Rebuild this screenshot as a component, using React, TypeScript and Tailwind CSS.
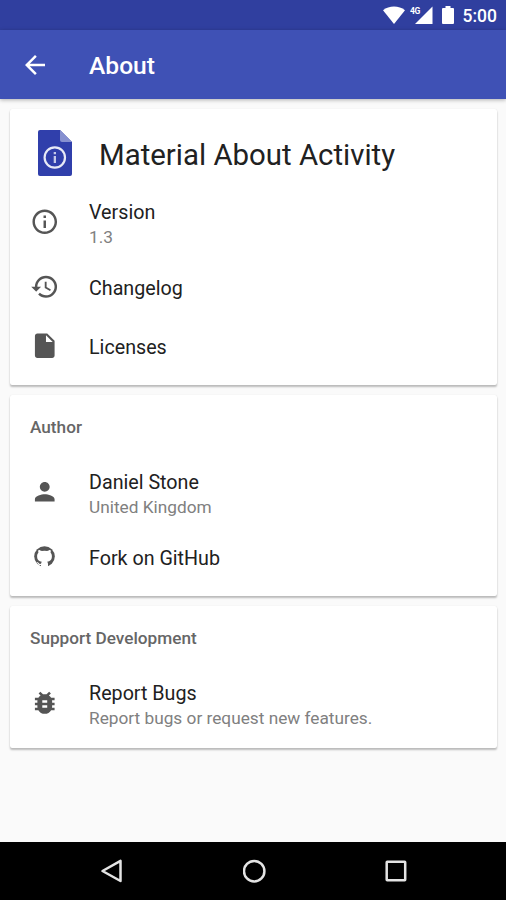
import type { ReactNode } from 'react';
import {
  MdArrowBack,
  MdBugReport,
  MdHistory,
  MdInfoOutline,
  MdInsertDriveFile,
  MdPerson,
} from 'react-icons/md';

type AboutItem = {
  icon: ReactNode;
  text: string;
  subText?: string;
};

type AboutCardProps = {
  title?: string;
  items: AboutItem[];
  children?: ReactNode;
};

function GithubIcon() {
  return (
    <svg width="21" height="21" viewBox="0 0 21 21">
      <circle cx="10.500" cy="10.500" r="10.300" fill="currentColor" />
      <path
        d="M4.500 3.900c1.300 0 2.500.6 3.400 1.200a12 12 0 0 1 5.200 0c.9-.6 2.100-1.200 3.400-1.200.4 1 .4 2 .1 2.800.9.900 1.300 2.100 1.300 3.600 0 3.700-2 5.200-4.700 5.500.5.500.8 1.200.8 2.100V21H7v-2c-2 .4-2.800-.6-3.400-1.700-.3-.6-.7-.9-1.200-1.200.9-.4 1.600.1 2.200.9.700.9 1.200 1.100 2.400.8.100-.8.400-1.500.8-2-2.700-.3-4.700-1.800-4.700-5.500 0-1.500.4-2.700 1.300-3.600-.3-.8-.3-1.800.1-2.800Z"
        fill="white"
      />
    </svg>
  );
}

const appItems: AboutItem[] = [
  { icon: <MdInfoOutline size={29.5} />, text: 'Version', subText: '1.3' },
  { icon: <MdHistory size={29.5} />, text: 'Changelog' },
  { icon: <MdInsertDriveFile size={29.5} />, text: 'Licenses' },
];

const authorItems: AboutItem[] = [
  { icon: <MdPerson size={29.5} />, text: 'Daniel Stone', subText: 'United Kingdom' },
  { icon: <GithubIcon />, text: 'Fork on GitHub' },
];

const supportItems: AboutItem[] = [
  { icon: <MdBugReport size={29.5} />, text: 'Report Bugs', subText: 'Report bugs or request new features.' },
];

function StatusBar() {
  return (
    <div className="flex h-[30px] items-center justify-end bg-[#303f9f] pr-[9px] text-white">
      <svg className="h-[18px] w-[22px]" viewBox="0 0 22 18" fill="currentColor">
        <path d="M11 18 0 4.300C6-.7 16-.7 22 4.300Z" />
      </svg>
      <svg className="ml-[5px] h-[18px] w-[23px]" viewBox="0 0 23 18" fill="currentColor">
        <path d="M22.500 .5V18H5Z" />
        <text x="0" y="8" fontSize="8.500" fontWeight="700" fontFamily="Roboto, sans-serif" letterSpacing="-0.300" stroke="#303f9f" strokeWidth="1.500" paintOrder="stroke">
          4G
        </text>
      </svg>
      <svg className="ml-[9px] h-[18px] w-[12px]" viewBox="0 0 12 18" fill="currentColor">
        <path d="M3.500 0h5v2H11a1 1 0 0 1 1 1v14a1 1 0 0 1-1 1H1a1 1 0 0 1-1-1V3a1 1 0 0 1 1-1h2.500Z" />
      </svg>
      <span className="ml-[9px] pt-[3px] text-[17.500px] font-medium leading-none">5:00</span>
    </div>
  );
}

function AppIcon() {
  return (
    <svg className="h-[46px] w-[34px]" viewBox="0 0 34 46">
      <path d="M2 0H22L34 12V44a2 2 0 0 1-2 2H2a2 2 0 0 1-2-2V2A2 2 0 0 1 2 0Z" fill="#303fab" />
      <path d="M22 0 34 12H24a2 2 0 0 1-2-2Z" fill="#8690d0" />
      <circle cx="16.800" cy="27.500" r="10.200" fill="none" stroke="#e8eaf6" strokeWidth="2.200" />
      <path d="M15.700 22h2.300v2.300h-2.300zM15.700 26h2.300v7h-2.300z" fill="#c5cae9" />
    </svg>
  );
}

function AboutCard({ title, items, children }: AboutCardProps) {
  return (
    <section className="rounded-[2px] bg-white pb-[10px] shadow-[0_2px_2px_rgba(0,0,0,0.25),0_0_1px_rgba(0,0,0,0.12)]">
      {children}
      {title && (
        <h2 className="h-[61px] px-5 pt-[20px] text-[17.200px] font-medium leading-6 text-[#666]">{title}</h2>
      )}
      <ul>
        {items.map(item => (
          <li key={item.text} className={item.subText ? 'flex h-[71px] items-center' : 'flex h-[59px] items-center'}>
            <div className="flex w-[69px] justify-center text-[#555]">{item.icon}</div>
            <div className={item.subText ? 'ml-[10px] pt-[4px]' : 'ml-[10px] pt-[5px]'}>
              <p className="text-[19.700px] leading-[26px] text-[#212121]">{item.text}</p>
              {item.subText && <p className="text-[17.250px] leading-[22px] text-[#808080]">{item.subText}</p>}
            </div>
          </li>
        ))}
      </ul>
    </section>
  );
}

function NavigationBar() {
  return (
    <nav className="flex h-[58px] items-center justify-between bg-black pl-[100px] pr-[99px] text-[#e4e4e4]">
      <svg width="24" height="24" viewBox="0 0 24 24" fill="none" stroke="currentColor" strokeWidth="2.500" strokeLinejoin="round">
        <path d="M20.500 1.800V22L2.500 12Z" />
      </svg>
      <svg width="24" height="24" viewBox="0 0 24 24" fill="none" stroke="currentColor" strokeWidth="2.500">
        <circle cx="11.200" cy="12.200" r="10.200" />
      </svg>
      <svg width="22" height="22" viewBox="0 0 22 22" fill="none" stroke="currentColor" strokeWidth="2.500">
        <rect x="1.700" y="1.700" width="18.500" height="18.500" rx="0.500" />
      </svg>
    </nav>
  );
}

export default function App() {
  return (
    <div className="flex h-[900px] w-[506px] flex-col overflow-hidden bg-[#fafafa] font-[Roboto,sans-serif]">
      <StatusBar />
      <header className="z-10 flex h-[69px] items-center bg-[#3f51b5] pl-5 text-white shadow-[0_1px_4px_rgba(0,0,0,0.3)]">
        <MdArrowBack size={30} />
        <h1 className="ml-[39px] pt-[4px] text-[24.600px] font-medium">About</h1>
      </header>

      <main className="flex flex-1 flex-col gap-[10px] pl-[10px] pr-[9px] pt-[10px]">
        <AboutCard items={appItems}>
          <div className="flex h-[77px] items-center pl-[27.500px] pt-[11px]">
            <AppIcon />
            <h2 className="ml-[27.500px] pt-[6px] text-[29.400px] leading-none text-[#212121]">Material About Activity</h2>
          </div>
        </AboutCard>
        <AboutCard title="Author" items={authorItems} />
        <AboutCard title="Support Development" items={supportItems} />
      </main>

      <NavigationBar />
    </div>
  );
}
